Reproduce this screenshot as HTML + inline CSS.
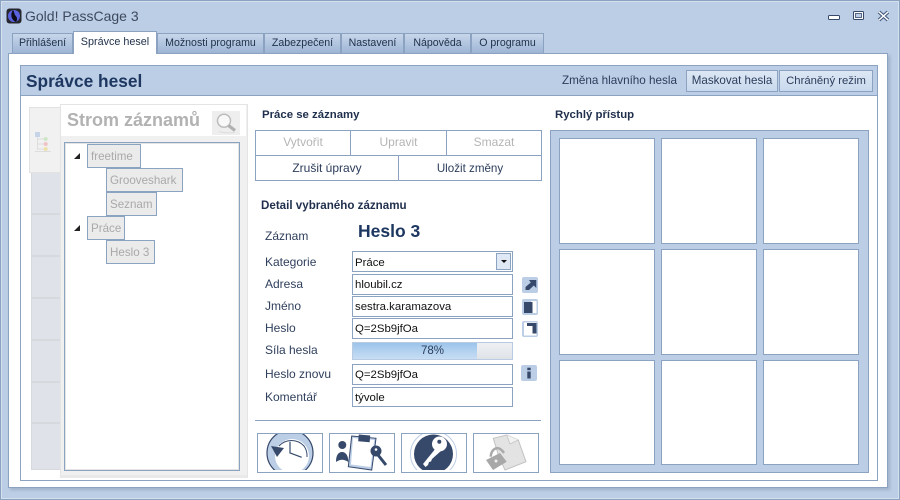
<!DOCTYPE html>
<html><head><meta charset="utf-8">
<style>
html,body{margin:0;padding:0;width:900px;height:500px;overflow:hidden}
body{position:relative;background:#bccee6;font-family:"Liberation Sans",sans-serif;font-size:12px;color:#24344f}
div,span.a{position:absolute;box-sizing:border-box;white-space:nowrap}
svg{position:absolute;display:block}
.tab{top:33px;height:20px;border:1px solid #8ba2c1;border-bottom:none;background:linear-gradient(#c7d6ea,#9db5d5);text-align:center;line-height:19px;font-size:10.6px;color:#1f3049}
.g{border:1px solid #8ba2c1;background:#fff;text-align:center;line-height:23px;color:#b5b5b5}
.n{border:1px solid #8ba2c1;background:#ebebeb;color:#a9a9a9;height:24px;line-height:24px;padding-left:3px;font-size:11.6px}
.l{left:265px;color:#2f3f5c;font-size:12px;line-height:16px}
.f{left:352px;width:161px;height:21px;border:1px solid #8ba2c1;background:#fff;padding-left:2px;line-height:21px;color:#111;font-size:11.4px}
.h{font-weight:bold;color:#1f2f4c;font-size:11.4px;line-height:18px}
.t{background:#fff;border:1px solid #8ba2c1;width:96px;height:106px}
.s{left:31px;width:30px;background:#dfe3e9;border-left:1px solid #d6d9de;border-bottom:2px solid #d6d9de}
.ib{top:433px;width:66px;height:40px;border:1px solid #8ba2c1;background:#fff;overflow:hidden}
.sq{left:522px;width:16px;height:16px;background:#bccee6;border-radius:2px}
</style></head><body>
<div style="left:0;top:0;width:900px;height:500px;border:1px solid #8ba2c1;box-shadow:inset 0 0 0 1px #d5e0ef"></div>
<svg style="left:6px;top:8px" width="16" height="16" viewBox="0 0 16 16"><rect x=".5" y=".5" width="15" height="15" rx="3" fill="#26262e"/><circle cx="8" cy="8" r="6" fill="#5a62e0"/><path d="M7 2C4 6 5 12 10 14C12 11 11 9 9 7C8 5 8 3 7 2Z" fill="#0d0d1a"/></svg>
<div style="left:25px;top:6px;font-size:14px;line-height:20px;color:#3d4a5e">Gold! PassCage 3</div>
<svg style="left:826px;top:8px" width="66" height="16" viewBox="0 0 66 16"><rect x="2.500" y="7.500" width="11" height="4" rx="1" fill="#fff" stroke="#36496b"/><rect x="27.500" y="3.500" width="10" height="8" rx="1" fill="#fff" stroke="#36496b"/><rect x="29.500" y="5.500" width="6" height="4" fill="#bccee6" stroke="#36496b" stroke-width=".8"/><path d="M53 4L62 12M62 4L53 12" stroke="#4a5d80" stroke-width="3.600"/><path d="M53 4L62 12M62 4L53 12" stroke="#fff" stroke-width="1.500"/></svg>

<div class="tab" style="left:12px;width:61px">Přihlášení</div>
<div class="tab" style="left:157px;width:107px">Možnosti programu</div>
<div class="tab" style="left:264px;width:77px">Zabezpečení</div>
<div class="tab" style="left:341px;width:63px">Nastavení</div>
<div class="tab" style="left:404px;width:67px">Nápověda</div>
<div class="tab" style="left:471px;width:73px">O programu</div>
<div style="left:8px;top:53px;width:880px;height:435px;background:#fff;border:1px solid #8ba2c1;box-shadow:2px 2px 3px #9fb0c9"></div>
<div class="tab" style="left:73px;top:31px;width:84px;height:23px;background:#fff;border-color:#8ba2c1;line-height:21px;font-size:10.800px;z-index:2">Správce hesel</div>

<div style="left:20px;top:65px;width:858px;height:416px;border:1px solid #8ba2c1;background:#fff"></div>
<div style="left:20px;top:65px;width:858px;height:31px;border:1px solid #8ba2c1;background:#bccee6"></div>
<div style="left:26px;top:69px;font-size:17.300px;font-weight:bold;color:#1d3760;line-height:24px">Správce hesel</div>
<div style="left:562px;top:73px;color:#2c3d5c;line-height:16px;font-size:11.700px">Změna hlavního hesla</div>
<div style="left:686px;top:70px;width:92px;height:22px;border:1px solid #8ba2c1;background:linear-gradient(#dde7f4,#c9d9ed);text-align:center;line-height:20px;color:#2c3d5c;font-size:11.600px">Maskovat hesla</div>
<div style="left:779px;top:70px;width:94px;height:22px;border:1px solid #8ba2c1;background:linear-gradient(#dde7f4,#c9d9ed);text-align:center;line-height:20px;color:#2c3d5c;font-size:11.300px">Chráněný režim</div>

<!-- side strip -->
<div style="left:29px;top:107px;width:32px;height:66px;background:#f1f1f1;border:1px solid #e2e2e2;border-right:none"></div>
<div class="s" style="top:173px;height:42px"></div>
<div class="s" style="top:215px;height:42px"></div>
<div class="s" style="top:257px;height:42px"></div>
<div class="s" style="top:299px;height:42px"></div>
<div class="s" style="top:341px;height:42px"></div>
<div class="s" style="top:383px;height:41px"></div>
<div class="s" style="top:424px;height:46px;border-bottom-width:1px"></div>
<svg style="left:34px;top:130px" width="20" height="23" viewBox="0 0 20 23"><rect x="1" y="2" width="5" height="5" fill="#c7d3e6"/><path d="M3.500 7V20M3.500 9H10M3.500 14H10M3.500 19H10M1 21.500H17" stroke="#ddd" stroke-width="1"/><circle cx="11.700" cy="9" r="2" fill="#cfe6c6"/><circle cx="11.700" cy="14" r="2" fill="#f0c4c4"/><circle cx="11.700" cy="19" r="2" fill="#eee0a8"/></svg>

<!-- tree panel -->
<div style="left:60px;top:104px;width:188px;height:374px;background:#f0f0f0;border:1px solid #e4e4e4;border-bottom:3px solid #e9e9e9"></div>
<div style="left:61px;top:105px;width:185px;height:31px;background:#fff"></div>
<div style="left:67px;top:108px;font-size:18px;font-weight:bold;color:#b2b2b2;line-height:24px">Strom záznamů</div>
<div style="left:212px;top:111px;width:28px;height:24px;background:#eee"></div>
<svg style="left:216px;top:113px" width="22" height="21" viewBox="0 0 22 21"><circle cx="8" cy="7.700" r="6.500" fill="#f8f8f8" stroke="#bcbcbc" stroke-width="1.500"/><path d="M12.500 12.500L19 17.500" stroke="#b0b0b0" stroke-width="3.200"/><path d="M3 18.500C8 20 14 20 19 19.500" stroke="#ddd" stroke-width="1" fill="none"/></svg>
<div style="left:64px;top:142px;width:176px;height:329px;background:#fff;border:1px solid #8ba2c1;box-shadow:inset 0 0 0 1px #e4e4e4"></div>
<svg style="left:74px;top:153px" width="7" height="7"><path d="M0 6L6 0V6Z" fill="#222"/></svg>
<svg style="left:74px;top:225px" width="7" height="7"><path d="M0 6L6 0V6Z" fill="#222"/></svg>
<div class="n" style="left:87px;top:144px;width:54px">freetime</div>
<div class="n" style="left:106px;top:168px;width:77px">Grooveshark</div>
<div class="n" style="left:106px;top:192px;width:51px">Seznam</div>
<div class="n" style="left:87px;top:216px;width:38px">Práce</div>
<div class="n" style="left:106px;top:240px;width:49px">Heslo 3</div>

<!-- middle -->
<div class="h" style="left:262px;top:106px">Práce se záznamy</div>
<div class="g" style="left:255px;top:130px;width:96px;height:26px">Vytvořit</div>
<div class="g" style="left:350px;top:130px;width:97px;height:26px">Upravit</div>
<div class="g" style="left:446px;top:130px;width:96px;height:26px">Smazat</div>
<div class="g" style="left:255px;top:155px;width:144px;height:26px;color:#2c3d5c;line-height:24px">Zrušit úpravy</div>
<div class="g" style="left:398px;top:155px;width:144px;height:26px;color:#2c3d5c;font-size:11.600px;line-height:25px">Uložit změny</div>
<div class="h" style="left:261px;top:197px;font-size:11.600px">Detail vybraného záznamu</div>
<div class="l" style="top:228px">Záznam</div>
<div style="left:358px;top:220px;font-size:17.500px;font-weight:bold;color:#1d3760;line-height:22px">Heslo 3</div>
<div class="l" style="top:254px">Kategorie</div>
<div class="f" style="top:251px;line-height:22px">Práce</div>
<div style="left:496px;top:253px;width:15px;height:17px;border:1px solid #8ba2c1;background:#dfe9f5"></div>
<svg style="left:501px;top:260px" width="6" height="4"><path d="M0 0H6L3 3Z" fill="#111"/></svg>
<div class="l" style="top:276px">Adresa</div>
<div class="f" style="top:274px">hloubil.cz</div>
<div class="l" style="top:298px">Jméno</div>
<div class="f" style="top:296px">sestra.karamazova</div>
<div class="l" style="top:320px">Heslo</div>
<div class="f" style="top:318px">Q=2Sb9jfOa</div>
<div class="l" style="top:342px">Síla hesla</div>
<div style="left:352px;top:342px;width:161px;height:18px;border:1px solid #b9cbe2;background:linear-gradient(#eef0f3,#dfe3e8)"></div>
<div style="left:353px;top:343px;width:124px;height:16px;background:linear-gradient(#9cc4ea,#c8def4)"></div>
<div style="left:352px;top:343px;width:161px;text-align:center;line-height:17px;color:#2c3d5c;font-size:11.500px">78%</div>
<div class="l" style="top:366px">Heslo znovu</div>
<div class="f" style="top:364px">Q=2Sb9jfOa</div>
<div class="l" style="top:389px">Komentář</div>
<div class="f" style="top:387px;height:20px;line-height:20px">tývole</div>

<div class="sq" style="top:277px"></div>
<svg style="left:522px;top:277px" width="16" height="16"><path d="M7 3H14.300V11L11.800 8.500L7 13H3.500V10L8.800 5.500Z" fill="#36496b"/></svg>
<div class="sq" style="top:299px"></div>
<svg style="left:522px;top:299px" width="16" height="16"><rect x="9" y="2" width="5.500" height="12" fill="#fff"/><rect x="2" y="3" width="8.500" height="11" fill="#36496b"/></svg>
<div class="sq" style="top:321px"></div>
<svg style="left:522px;top:321px" width="16" height="16"><rect x="2" y="1.500" width="12.500" height="13" fill="#fff"/><path d="M5 2H14.500V12.500H10.500V5H5Z" fill="#36496b"/></svg>
<div class="sq" style="top:365px;left:521px"></div>
<svg style="left:521px;top:365px" width="16" height="16"><rect x="6.300" y="2.700" width="3.400" height="2.500" fill="#36496b"/><rect x="6.300" y="6.500" width="3.400" height="7" fill="#36496b"/></svg>

<div style="left:255px;top:420px;width:286px;height:1px;background:#8ba2c1"></div>

<div class="ib" style="left:257px"><svg style="left:-1px;top:-1px" width="66" height="40" viewBox="0 0 66 40"><circle cx="33" cy="20" r="23" fill="#bccee6" stroke="#36496b" stroke-width="1.200"/><circle cx="35" cy="23" r="17" fill="#fff"/><path d="M22 13A17 17 0 0 1 47 13A17 17 0 0 1 50 24" fill="none" stroke="#36496b" stroke-width="1"/><path d="M14 13L27 15L20 24Z" fill="#36496b"/><path d="M33 8.700V20L44.700 24.300" fill="none" stroke="#36496b" stroke-width="1.200"/><rect x="0" y="37" width="66" height="3" fill="#fff"/></svg></div>
<div class="ib" style="left:329px"><svg style="left:-1px;top:-1px" width="66" height="40" viewBox="0 0 66 40"><circle cx="13.300" cy="12" r="4" fill="#36496b"/><path d="M7 29C7 22 9.500 19 13 19C17 19 19.500 23 19.300 29C15 26 11 26 7 29Z" fill="#36496b"/><path d="M22.700 3L47 5.300L42.700 37L19.300 33.700Z" fill="#bccee6" stroke="#36496b" stroke-width="1"/><path d="M24 5L45.300 7L41.500 34L22 31.500Z" fill="#fff"/><rect x="29.500" y="2" width="11.500" height="6.700" fill="#36496b" transform="rotate(5 35 5)"/><circle cx="47" cy="18" r="5.500" fill="#36496b"/><circle cx="47" cy="16.500" r="1.300" fill="#fff"/><path d="M49 22L57 32" stroke="#36496b" stroke-width="3"/></svg></div>
<div class="ib" style="left:401px"><svg style="left:-1px;top:-1px" width="66" height="40" viewBox="0 0 66 40"><circle cx="32.500" cy="21" r="23" fill="#fff" stroke="#bccee6" stroke-width="1"/><circle cx="32.500" cy="21" r="19.500" fill="#36496b"/><circle cx="38.500" cy="11" r="7.500" fill="#fff"/><path d="M35 15L22 31L24.500 34L27 32L28 29L30 28.500L31 26L41 17Z" fill="#fff"/><circle cx="38.300" cy="8.700" r="2" fill="#36496b"/><rect x="0" y="37" width="66" height="3" fill="#fff"/></svg></div>
<div class="ib" style="left:473px"><svg style="left:-1px;top:-1px" width="66" height="40" viewBox="0 0 66 40"><path d="M20.300 5.300L33.700 2L45.300 7L53 28.700L32 37L26 24Z" fill="#e3e3e3" stroke="#c2c2c2" stroke-width="1"/><path d="M33.700 2L37 11L45.300 7" fill="#f2f2f2" stroke="#c2c2c2" stroke-width=".8"/><path d="M17.700 23.700C18 16 25 11 31 20" fill="none" stroke="#aaa" stroke-width="2.500"/><path d="M13 27L27 20L33.700 28.700L20 37Z" fill="#a8a8a8"/><circle cx="23" cy="28" r="1.500" fill="#eee"/><rect x="0" y="37.500" width="66" height="3" fill="#fff"/></svg></div>

<!-- quick access -->
<div class="h" style="left:555px;top:106px">Rychlý přístup</div>
<div style="left:550px;top:130px;width:319px;height:343px;background:#bccee6;border:1px solid #8ba2c1"></div>
<div class="t" style="left:559px;top:138px"></div>
<div class="t" style="left:661px;top:138px"></div>
<div class="t" style="left:763px;top:138px"></div>
<div class="t" style="left:559px;top:249px"></div>
<div class="t" style="left:661px;top:249px"></div>
<div class="t" style="left:763px;top:249px"></div>
<div class="t" style="left:559px;top:360px;height:105px"></div>
<div class="t" style="left:661px;top:360px;height:105px"></div>
<div class="t" style="left:763px;top:360px;height:105px"></div>
</body></html>
